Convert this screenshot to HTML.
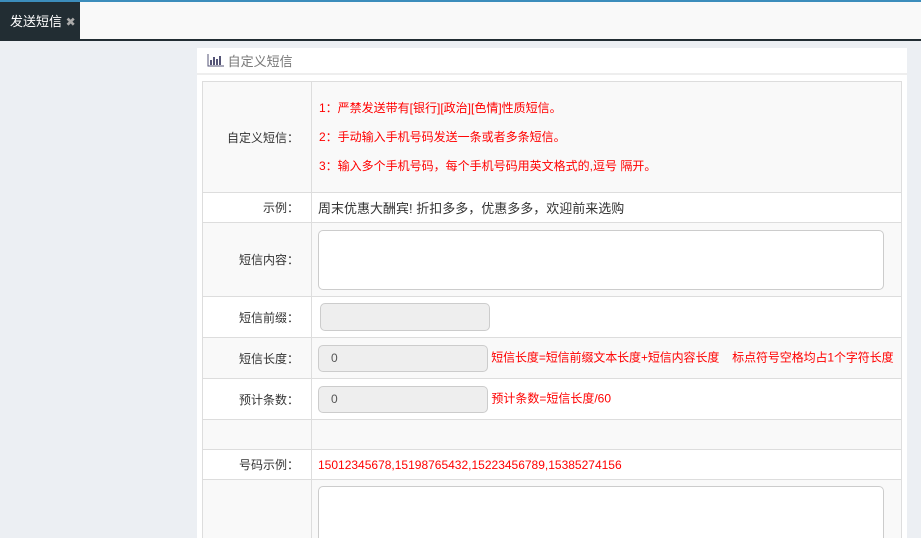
<!DOCTYPE html>
<html><head><meta charset="utf-8"><style>
*{margin:0;padding:0;box-sizing:border-box}
body{width:921px;height:534px;overflow:hidden;background:#eceff3;font-family:"Liberation Sans","Noto Sans CJK SC",sans-serif;font-size:12px;color:#333;position:relative}
.top{position:absolute;left:0;top:0;width:921px;height:2px;background:#3c8dbc}
.bar{position:absolute;left:0;top:2px;width:921px;height:39px;background:#f9f9f9;border-bottom:2px solid #222d33}
.tab{position:absolute;left:0;top:0;width:80px;height:39px;background:#222d33;color:#fff;font-size:13px;line-height:39px;padding-left:10px}
.tab span{color:#aaa;font-size:12px}
.panel{position:absolute;left:197px;top:48px;width:710px;height:490px;background:#fff;overflow:hidden}
.ph{height:27px;line-height:27px;padding-left:10px;color:#777;font-size:13px;border-bottom:2px solid #eee}
table{position:absolute;left:5px;top:33px;width:700px;border-collapse:collapse;table-layout:fixed}
td{border:1px solid #ddd;vertical-align:middle;white-space:nowrap;overflow:visible}
td.l{width:109px;text-align:right;padding-right:12px;color:#333}
td.v{padding-left:6px}
tr.g td{background:#f9f9f9}
.red{color:#f00}
.inp{display:inline-block;background:#eee;border:1px solid #ccc;border-radius:5px;vertical-align:middle;color:#555;padding-left:12px}
.ta{display:block;background:#fff;border:1px solid #ccc;border-radius:5px;width:566px;height:60px}
</style></head><body>
<div class="top"></div>
<div class="bar"><div class="tab">发送短信 <span>✖</span></div></div>
<div class="panel">
<div class="ph"><svg width="17" height="13" viewBox="0 0 17 13" style="vertical-align:-1px"><path d="M1 0v12h16" stroke="#557" fill="none"/><rect x="3" y="6" width="2" height="5" fill="#557"/><rect x="6" y="3" width="2" height="8" fill="#557"/><rect x="9" y="5" width="2" height="6" fill="#557"/><rect x="12" y="2" width="2" height="9" fill="#557"/></svg> 自定义短信</div>
<table>
<tr class="g" style="height:111px"><td class="l">自定义短信：</td><td class="v red" style="line-height:29px;padding-left:7px">1：严禁发送带有[银行][政治][色情]性质短信。<br>2：手动输入手机号码发送一条或者多条短信。<br>3：输入多个手机号码，每个手机号码用英文格式的,逗号 隔开。</td></tr>
<tr style="height:30px"><td class="l">示例：</td><td class="v" style="font-size:13px">周末优惠大酬宾! 折扣多多，优惠多多，欢迎前来选购</td></tr>
<tr class="g" style="height:74px"><td class="l">短信内容：</td><td class="v"><div class="ta"></div></td></tr>
<tr style="height:41px"><td class="l">短信前缀：</td><td class="v" style="padding-left:8px"><span class="inp" style="width:170px;height:28px"></span></td></tr>
<tr class="g" style="height:41px"><td class="l">短信长度：</td><td class="v"><span class="inp" style="width:170px;height:27px;line-height:25px">0</span><span class="red" style="letter-spacing:-0.1px"> 短信长度=短信前缀文本长度+短信内容长度&nbsp;&nbsp;&nbsp;&nbsp;标点符号空格均占1个字符长度</span></td></tr>
<tr style="height:41px"><td class="l">预计条数：</td><td class="v"><span class="inp" style="width:170px;height:27px;line-height:25px">0</span><span class="red"> 预计条数=短信长度/60</span></td></tr>
<tr class="g" style="height:30px"><td class="l"></td><td class="v"></td></tr>
<tr style="height:30px"><td class="l">号码示例：</td><td class="v red">15012345678,15198765432,15223456789,15385274156</td></tr>
<tr class="g" style="height:74px"><td class="l"></td><td class="v" style="vertical-align:top;padding-top:6px"><div class="ta"></div></td></tr>
</table>
</div>
</body></html>
